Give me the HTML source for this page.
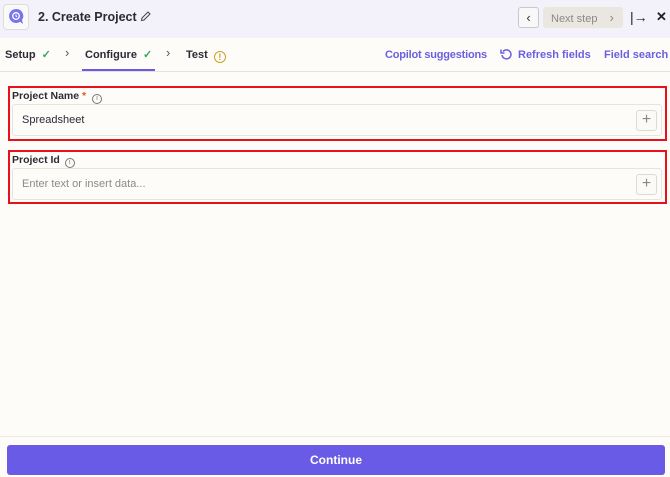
<!DOCTYPE html>
<html><head><meta charset="utf-8"><style>
*{box-sizing:border-box;margin:0;padding:0}
body{width:670px;height:477px;background:#fdfcf9;font-family:"Liberation Sans",sans-serif;position:relative;overflow:hidden;color:#2b2a35}
.abs{position:absolute}
.hdr{left:0;top:0;width:670px;height:38px;background:#f3f2fb}
.logo{left:3px;top:4px;width:26px;height:26px;border:1px solid #ddd;border-radius:4px;background:#fafafa}
.title{left:38px;top:10px;font-size:12.5px;font-weight:bold;color:#2b2a35}
.tabs{left:0;top:38px;width:670px;height:34px;border-bottom:1px solid #e4e2dc}
.tab{top:49px;font-size:11px;font-weight:bold;color:#2b2a35;line-height:12px}
.link{top:49px;font-size:11px;font-weight:bold;color:#6a5fe0;line-height:12px}
.red{left:8px;width:659px;border:2px solid #e8101a}
.lbl{font-size:10.5px;font-weight:bold;color:#2b2a35}
.inp{left:12px;width:650px;height:32px;border:1px solid #e6e4df;border-radius:3px;background:#fdfcf9;font-size:11px}
.plus{left:636px;width:21px;height:21px;border:1px solid #dcdad5;border-radius:3px;background:#fbfaf7;color:#888;font-size:16px;line-height:18px;text-align:center}
.btn{left:7px;top:445px;width:658px;height:30px;background:#695be6;border-radius:3px;color:#fff;font-weight:bold;font-size:12px;text-align:center;line-height:30px}
</style></head><body>
<div class="abs hdr"></div>
<div class="abs logo"><svg width="24" height="24" viewBox="0 0 24 24"><path d="M12 4a7 7 0 1 0 4 12.8L19 19l-1-4A7 7 0 0 0 12 4z" fill="#7b72ee"/><circle cx="12" cy="11" r="3.3" fill="none" stroke="#fff" stroke-width="1.3"/><path d="M12 9.5v1.6l1 .8" stroke="#fff" stroke-width="1" fill="none"/></svg></div>
<div class="abs title">2. Create Project <svg width="11" height="11" viewBox="0 0 11 11" style="vertical-align:-1px"><path d="M1.5 9.5l.5-2.5 6-6 2 2-6 6z" fill="none" stroke="#444" stroke-width="1"/></svg></div>
<div class="abs" style="left:518px;top:7px;width:21px;height:21px;border:1px solid #c9c8cc;border-radius:3px;background:#f8f8f8;text-align:center;line-height:19px;font-size:13px;color:#333">&#8249;</div>
<div class="abs" style="left:543px;top:7px;width:80px;height:21px;background:#e9e7df;border-radius:3px;color:#8a8884;font-size:11px;line-height:21px;padding-left:8px">Next step <span style="margin-left:9px;font-size:13px">&#8250;</span></div>
<div class="abs" style="left:630px;top:9px;font-size:14px;color:#222">|&#8594;</div>
<div class="abs" style="left:656px;top:9px;font-size:13px;font-weight:bold;color:#222">✕</div>
<div class="abs tabs"></div>
<div class="abs tab" style="left:5px">Setup <span style="color:#3aa55a;margin-left:3px">✓</span></div>
<div class="abs tab" style="left:65px;color:#555;font-weight:normal;font-size:13px;top:47px">›</div>
<div class="abs tab" style="left:85px">Configure <span style="color:#3aa55a;margin-left:3px">✓</span></div>
<div class="abs" style="left:82px;top:69px;width:73px;height:2px;background:#695be6"></div>
<div class="abs tab" style="left:166px;color:#555;font-weight:normal;font-size:13px;top:47px">›</div>
<div class="abs tab" style="left:186px">Test <span style="display:inline-block;width:12px;height:12px;border:1.3px solid #c9a227;border-radius:50%;color:#c9a227;font-size:9px;text-align:center;line-height:10px;margin-left:3px;vertical-align:-2px">!</span></div>
<div class="abs link" style="left:385px;letter-spacing:-0.2px">Copilot suggestions</div>
<div class="abs" style="left:500px;top:48px"><svg width="13" height="13" viewBox="0 0 13 13"><path d="M3 3.5A4.5 4.5 0 1 1 2 7" fill="none" stroke="#6a5fe0" stroke-width="1.5"/><path d="M1 1.5v3.5h3.5" fill="none" stroke="#6a5fe0" stroke-width="1.5"/></svg></div>
<div class="abs link" style="left:518px">Refresh fields</div>
<div class="abs link" style="left:604px">Field search</div>
<div class="abs red" style="top:86px;height:55px"></div>
<div class="abs lbl" style="left:12px;top:90px">Project Name <span style="color:#e8541a">*</span> <span style="display:inline-block;width:10px;height:10px;border:1px solid #777;border-radius:50%;font-size:7px;text-align:center;line-height:8px;color:#777;font-weight:normal;margin-left:3px;vertical-align:-1px">i</span></div>
<div class="abs inp" style="top:104px"><span class="abs" style="left:9px;top:9px;color:#2b2a35">Spreadsheet</span></div>
<div class="abs plus" style="top:110px">+</div>
<div class="abs red" style="top:150px;height:54px"></div>
<div class="abs lbl" style="left:12px;top:154px">Project Id <span style="display:inline-block;width:10px;height:10px;border:1px solid #777;border-radius:50%;font-size:7px;text-align:center;line-height:8px;color:#777;font-weight:normal;margin-left:2px;vertical-align:-1px">i</span></div>
<div class="abs inp" style="top:168px"><span class="abs" style="left:9px;top:9px;color:#8d8b87">Enter text or insert data...</span></div>
<div class="abs plus" style="top:174px">+</div>
<div class="abs" style="left:0;top:436px;width:670px;height:1px;background:#ebe9e4"></div>
<div class="abs btn">Continue</div>
</body></html>
